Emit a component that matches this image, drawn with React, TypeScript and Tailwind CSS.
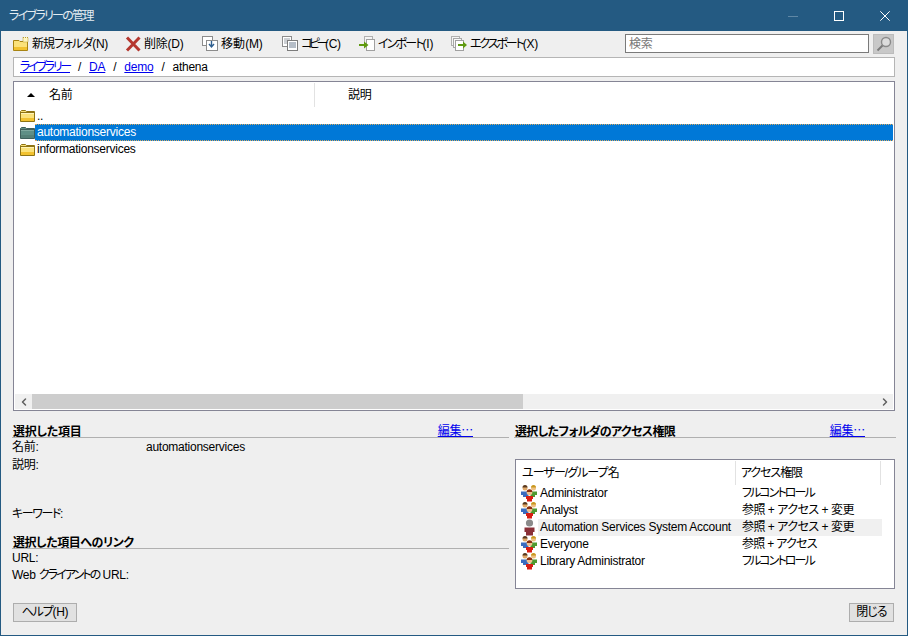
import type { ReactNode } from "react";
import { ChevronLeft, ChevronRight } from "lucide-react";

function Folder({ tint }: { tint?: boolean }) {
  const fill = tint ? "#5f8f86" : "#fbe27a";
  const edge = tint ? "#3f5f5c" : "#8f7414";
  return (
    <svg width="15" height="12" viewBox="0 0 15 12" className="shrink-0">
      <path d="M.5 1.5 L1.5 .5 H5.5 L6.5 1.5 H14.5 V11.5 H.5 Z" fill={fill} stroke={edge} />
      <path d="M1 2.5 H14" stroke={edge} />
      <path d="M1 3.5 H14" stroke={tint ? "#7fa89f" : "#fff4b8"} />
      <rect x="1" y="8" width="13" height="3" fill={tint ? "#558077" : "#f2c230"} />
    </svg>
  );
}

function NewFolderIcon() {
  return (
    <svg width="16" height="14" viewBox="0 0 16 14">
      <path d="M.5 3.5 H6 L7 4.5 H14.5 V13.5 H.5 Z" fill="#fbe27a" stroke="#a88412" />
      <rect x="1" y="10" width="13" height="3" fill="#f2c230" />
      <path d="M10 .5 H15 V5 H10 Z" fill="#fff6c0" stroke="#b89a2a" strokeDasharray="1 1" />
    </svg>
  );
}

function DeleteIcon() {
  return (
    <svg width="16" height="16" viewBox="0 0 16 16">
      <path d="M2 1.5 L14.5 14.5 M14.5 1.5 L2 14.5" stroke="#b5372f" strokeWidth="3" />
    </svg>
  );
}

function MoveIcon() {
  return (
    <svg width="16" height="15" viewBox="0 0 16 15">
      <rect x=".5" y=".5" width="10" height="9" fill="#fff" stroke="#8c8c8c" />
      <rect x="4.5" y="4.5" width="11" height="10" fill="#fff" stroke="#8c8c8c" />
      <path d="M9.5 5 V10 M7 8 L9.5 11 L12 8" fill="none" stroke="#2f5f8f" strokeWidth="1.4" />
    </svg>
  );
}

function CopyIcon() {
  return (
    <svg width="16" height="15" viewBox="0 0 16 15">
      <rect x=".5" y=".5" width="9" height="10" fill="#fff" stroke="#8c8c8c" />
      <path d="M2 3 H8 M2 5 H8 M2 7 H8" stroke="#9aa0a8" />
      <rect x="5.5" y="4.5" width="10" height="10" fill="#fff" stroke="#7c7c7c" />
      <path d="M7 7 H14 M7 9 H14 M7 11 H14" stroke="#6c7c90" />
    </svg>
  );
}

function ImportIcon() {
  return (
    <svg width="16" height="15" viewBox="0 0 16 15">
      <rect x="5.5" y=".5" width="8" height="9" fill="#f4f4f4" stroke="#b0b0b0" />
      <rect x="7.5" y="3.5" width="8" height="11" fill="#fff" stroke="#a0a0a0" />
      <path d="M0 8 H5 V5.5 L9.5 9 L5 12.5 V10 H0 Z" fill="#5f9a10" />
    </svg>
  );
}

function ExportIcon() {
  return (
    <svg width="16" height="15" viewBox="0 0 16 15">
      <rect x=".5" y=".5" width="8" height="9" fill="#f4f4f4" stroke="#b0b0b0" />
      <rect x="2.5" y="2.5" width="8" height="9" fill="#f8f8f8" stroke="#a8a8a8" />
      <rect x="4.5" y="4.5" width="8" height="10" fill="#fff" stroke="#a0a0a0" />
      <path d="M7 8 H12 V5.5 L16 9 L12 12.5 V10 H7 Z" fill="#5f9a10" />
    </svg>
  );
}

function SearchIcon() {
  return (
    <svg width="16" height="16" viewBox="0 0 16 16">
      <circle cx="10" cy="6" r="4.5" fill="#dcdcdc" stroke="#8a8a8a" strokeWidth="1.4" />
      <path d="M6.5 9.5 L1.5 14.5" stroke="#7a7a7a" strokeWidth="2" />
    </svg>
  );
}

function GroupIcon() {
  return (
    <svg width="17" height="17" viewBox="0 0 17 17" className="shrink-0">
      <circle cx="4" cy="3" r="2.5" fill="#e0a868" />
      <path d="M1.5 2.5 A2.5 2.5 0 0 1 6.5 2.5 Z" fill="#5a3a20" />
      <path d="M0 6.5 H7.5 V12 H2 V10 H0 Z" fill="#3a6cc0" />
      <circle cx="12.5" cy="3" r="2.5" fill="#eec080" />
      <path d="M10 2.5 A2.5 2.5 0 0 1 15 2.5 Z" fill="#c89820" />
      <path d="M9.5 6.5 H16 V10 H14 V12 H9.5 Z" fill="#4f9a30" />
      <circle cx="8.5" cy="7.5" r="2.8" fill="#f0c090" />
      <path d="M5.7 7 A2.8 2.8 0 0 1 11.3 7 Z" fill="#8a3010" />
      <path d="M5 11 H12 V14 H11 V16.5 H6 V14 H5 Z" fill="#d81e14" />
    </svg>
  );
}

function SystemIcon() {
  return (
    <svg width="17" height="17" viewBox="0 0 17 17" className="shrink-0">
      <circle cx="8.5" cy="4" r="3.6" fill="#8a8a8a" />
      <path d="M3.5 8.5 H13.5 V13 H12 V16.5 H5 V13 H3.5 Z" fill="#8a3038" />
    </svg>
  );
}

const tools = [
  { icon: <NewFolderIcon />, label: "新規フォルダ", key: "(N)", width: "w-[112px]", track: "tracking-[-0.9px]" },
  { icon: <DeleteIcon />, label: "削除", key: "(D)", width: "w-[77px]", track: "" },
  { icon: <MoveIcon />, label: "移動", key: "(M)", width: "w-[80px]", track: "tracking-[0.1px]" },
  { icon: <CopyIcon />, label: "コピー", key: "(C)", width: "w-[77px]", track: "tracking-[-3.5px]" },
  { icon: <ImportIcon />, label: "インポート", key: "(I)", width: "w-[92px]", track: "tracking-[-1.85px]" },
  { icon: <ExportIcon />, label: "エクスポート", key: "(X)", width: "w-[174px]", track: "tracking-[-2.1px]" },
];

const FULL = "tracking-[-1.9px]";
const READ_WRITE = "tracking-[-0.5px]";
const READ = "tracking-[-0.7px]";

const perms = [
  { name: "Administrator", access: "フルコントロール", track: FULL },
  { name: "Analyst", access: "参照 + アクセス + 変更", track: READ_WRITE },
  { name: "Automation Services System Account", access: "参照 + アクセス + 変更", track: READ_WRITE, system: true },
  { name: "Everyone", access: "参照 + アクセス", track: READ },
  { name: "Library Administrator", access: "フルコントロール", track: FULL },
];

function SectionTitle({ title, link, track }: { title: string; link?: string; track?: string }) {
  return (
    <div className="h-[14px] border-b border-[#b0b0b0] flex justify-between items-end leading-[14px]">
      <span className={`pl-px font-bold translate-y-[2px] ${track ?? ""}`}>{title}</span>
      {link && <a className={`text-[#0000ee] underline ${link} font-['Noto_Sans_CJK_JP',sans-serif]`}>編集…</a>}
    </div>
  );
}

function Field({ label, value, tall, track }: { label: ReactNode; value?: string; tall?: boolean; track?: string }) {
  return (
    <div className={`${tall ? "h-[18px]" : "h-[17px]"} flex items-center whitespace-nowrap`}>
      <span className={`${value ? "w-[134px]" : ""} ${track ?? ""}`}>{label}</span>
      {value && <span>{value}</span>}
    </div>
  );
}

export default function App() {
  return (
    <div lang="ja" className="w-[908px] h-[636px] flex flex-col overflow-hidden border-x border-b border-[#245a82] bg-[#efefef] text-[12px] text-black tracking-[-0.25px] [font-feature-settings:'palt'] font-['Liberation_Sans','Noto_Sans_CJK_JP',sans-serif]">
      {/* title bar */}
      <div className="h-[31px] shrink-0 -mx-px bg-[#245a82] flex items-center pl-[9px] text-[#e4ecf2]">
        <span className="tracking-[-1.7px]">ライブラリーの管理</span>
        <div className="ml-auto flex items-center gap-[36px] pr-[18px]">
          <svg width="10" height="10" viewBox="0 0 10 10">
            <path d="M0 5.5 H10" stroke="#5f87a5" />
          </svg>
          <svg width="10" height="10" viewBox="0 0 10 10">
            <rect x=".5" y=".5" width="9" height="9" fill="none" stroke="#fff" />
          </svg>
          <svg width="10" height="10" viewBox="0 0 10 10">
            <path d="M.3 .3 L9.7 9.7 M9.7 .3 L.3 9.7" stroke="#fff" />
          </svg>
        </div>
      </div>

      <div className="flex-1 flex flex-col pl-[12px] pr-[12px]">
        {/* toolbar */}
        <div className="h-[25px] shrink-0 flex items-center">
          {tools.map((t) => (
            <div key={t.label} className={`${t.width} flex items-center gap-[3px]`}>
              <span className="w-[16px] flex justify-center">{t.icon}</span>
              <span>
                <span className={t.track}>{t.label}</span>
                {t.key}
              </span>
            </div>
          ))}
          <input
            readOnly
            placeholder="検索"
            className="w-[244px] h-[19px] border border-[#7a7a7a] bg-white pl-[3px] outline-none placeholder:text-[#777777]"
          />
          <button className="ml-[4px] w-[21px] h-[20px] bg-[#c8c8c8] border border-[#bcbcbc] flex items-center justify-center">
            <SearchIcon />
          </button>
        </div>

        {/* breadcrumb */}
        <div className="mt-px h-[20px] shrink-0 border border-[#b5b5b5] bg-white flex items-center pl-[6px] gap-[8px]">
          <a className="text-[#0000ee] underline tracking-[-2.25px]">ライブラリー</a>
          <span>/</span>
          <a className="text-[#0000ee] underline">DA</a>
          <span>/</span>
          <a className="text-[#0000ee] underline">demo</a>
          <span>/</span>
          <span>athena</span>
        </div>

        {/* file list */}
        <div className="mt-[4px] h-[330px] shrink-0 border border-[#858595] bg-white flex flex-col p-px">
          <div className="h-[24px] shrink-0 flex items-center">
            <span className="w-[34px] flex justify-end pr-[14px]">
              <span className="w-0 h-0 border-x-[4px] border-x-transparent border-b-[4px] border-b-black" />
            </span>
            <span className="w-[265px]">名前</span>
            <span className="h-[24px] border-l border-[#e2e2e2] pl-[33px] leading-[24px]">説明</span>
          </div>
          <div className="h-[17px] shrink-0 flex items-center pl-[5px]">
            <Folder />
            <span className="pl-[2px]">..</span>
          </div>
          <div className="h-[17px] shrink-0 flex items-center pl-[5px]">
            <Folder tint />
            <span className="flex-1 h-[17px] bg-[#0078d7] text-white leading-[15px] pl-[2px] border-y border-dotted border-[#d8a860]">automationservices</span>
          </div>
          <div className="h-[17px] shrink-0 flex items-center pl-[5px]">
            <Folder />
            <span className="pl-[2px] leading-[15px]">informationservices</span>
          </div>
          <div className="flex-1" />
          {/* horizontal scrollbar */}
          <div className="h-[15px] shrink-0 bg-[#f0f0f0] flex items-center">
            <span className="w-[17px] flex justify-center">
              <ChevronLeft className="w-[12px] h-[12px] text-[#606060]" strokeWidth={3} />
            </span>
            <span className="w-[491px] h-[15px] bg-[#cdcdcd]" />
            <span className="ml-auto w-[17px] flex justify-center">
              <ChevronRight className="w-[12px] h-[12px] text-[#606060]" strokeWidth={3} />
            </span>
          </div>
        </div>

        {/* details */}
        <div className="mt-[13px] shrink-0 flex -ml-px -mr-px">
          <div className="w-[497px]">
            <SectionTitle title="選択した項目" link="mr-[36px]" />
            <Field label="名前:" value="automationservices" tall />
            <Field label="説明:" tall />
            <div className="h-[31px]" />
            <Field label="キーワード:" track="tracking-[-1.4px]" />
            <div className="mt-[13px]">
              <SectionTitle title="選択した項目へのリンク" track="tracking-[-0.45px]" />
            </div>
            <Field label="URL:" />
            <Field
              label={
                <>
                  Web <span className="tracking-[-1.9px]">クライアントの</span> URL:
                </>
              }
            />
          </div>
          <div className="ml-[5px] flex-1">
            <SectionTitle title="選択したフォルダのアクセス権限" link="mr-[31px]" track="tracking-[-0.65px]" />
            <div className="mt-[21px] mx-px h-[130px] border border-[#858595] bg-white pt-px pl-[5px]">
              <div className="h-[24px] flex items-center">
                <span className="w-[214px] pl-px tracking-[-0.95px]">ユーザー/グループ名</span>
                <span className="h-[24px] border-l border-r border-[#e2e2e2] pl-[5px] w-[146px] leading-[24px] tracking-[-1.1px]">アクセス権限</span>
              </div>
              {perms.map((p) => (
                <div key={p.name} className="h-[17px] flex items-center">
                  {p.system ? <SystemIcon /> : <GroupIcon />}
                  <div className={`w-[344px] h-[17px] pb-[2px] flex items-center ${p.system ? "bg-[#f0f0f0]" : ""}`}>
                    <span className="w-[204px] pl-[2px] whitespace-nowrap">{p.name}</span>
                    <span className={p.track}>{p.access}</span>
                  </div>
                </div>
              ))}
            </div>
          </div>
        </div>

        {/* footer */}
        <div className="mt-[14px] shrink-0 flex justify-between pr-px">
          <button className="w-[64px] h-[19px] bg-[#e1e1e1] border border-[#adadad] leading-[17px]">
            <span className="tracking-[-1.2px]">ヘルプ</span>(H)
          </button>
          <button className="w-[45px] h-[19px] bg-[#e1e1e1] border border-[#adadad] leading-[17px] tracking-[-0.9px]">閉じる</button>
        </div>
      </div>
    </div>
  );
}
